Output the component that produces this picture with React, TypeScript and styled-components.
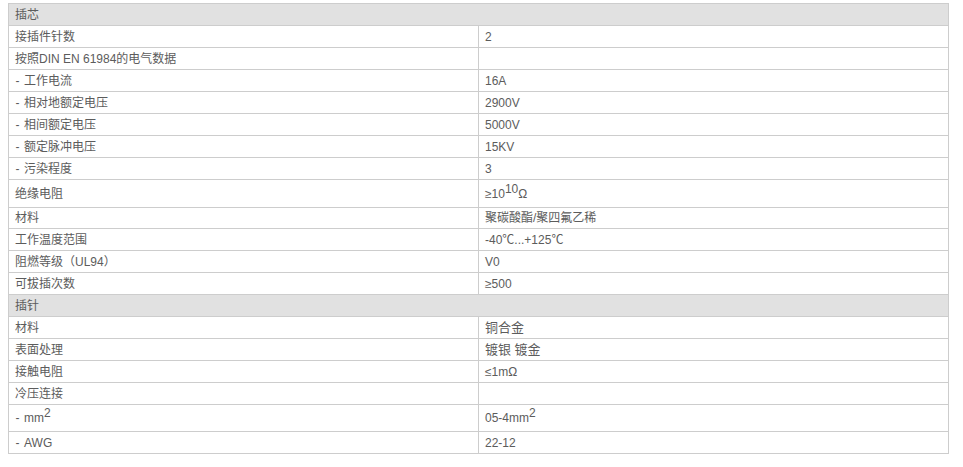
import styled, { createGlobalStyle } from "styled-components"

const Global = createGlobalStyle`
  body {
    margin: 0;
    padding: 3px 8px;
    background: #fff;
    font-family: "Liberation Sans", Arial, "Noto Sans CJK SC", sans-serif;
  }`

const Table = styled.table`
  width: 941px;
  border-collapse: collapse;
  table-layout: fixed;
  font-size: 12px;
  color: #5c5c5c;`

const Row = styled.tr<{ $head?: boolean; $tall?: number }>`
  height: ${p => p.$tall ?? 22}px;
  background: ${p => (p.$head ? "#e1e1e1" : "#fff")};`

const Cell = styled.td<{ $big?: boolean }>`
  border: 1px solid #cdcdcd;
  padding: 0 6px;
  vertical-align: middle;
  white-space: nowrap;
  font-size: ${p => (p.$big ? "13px" : "12px")};
  line-height: 16px;`

const Sup = styled.sup`
  font-size: 12px;
  vertical-align: 5px;
  line-height: 0;`

const Dash = styled.span`
  display: inline-block;
  width: 5px;
  margin-right: 4px;
  text-align: center;`

type Item = {
  k: React.ReactNode
  v?: React.ReactNode
  sub?: boolean
  head?: boolean
  tall?: number
  big?: boolean
}

const rows: Item[] = [
  { k: "插芯", head: true },
  { k: "接插件针数", v: "2" },
  { k: "按照DIN EN 61984的电气数据", v: "" },
  { k: "工作电流", v: "16A", sub: true },
  { k: "相对地额定电压", v: "2900V", sub: true },
  { k: "相间额定电压", v: "5000V", sub: true },
  { k: "额定脉冲电压", v: "15KV", sub: true },
  { k: "污染程度", v: "3", sub: true },
  { k: "绝缘电阻", v: <>≥10<Sup>10</Sup>Ω</>, tall: 28 },
  { k: "材料", v: "聚碳酸酯/聚四氟乙稀", tall: 21 },
  { k: "工作温度范围", v: "-40℃...+125℃" },
  { k: "阻燃等级（UL94）", v: "V0" },
  { k: "可拔插次数", v: "≥500" },
  { k: "插针", head: true },
  { k: "材料", v: "铜合金", big: true },
  { k: "表面处理", v: "镀银 镀金", big: true },
  { k: "接触电阻", v: "≤1mΩ" },
  { k: "冷压连接", v: "" },
  { k: <>mm<Sup>2</Sup></>, v: <>05-4mm<Sup>2</Sup></>, sub: true, tall: 27 },
  { k: "AWG", v: "22-12", sub: true },
]

export default function App() {
  return (
    <>
      <Global />
      <Table>
        <colgroup>
          <col style={{ width: 470 }} />
          <col />
        </colgroup>
        <tbody>
          {rows.map((r, i) => (
            <Row key={i} $head={r.head} $tall={r.tall}>
              {r.head ? (
                <Cell colSpan={2}>{r.k}</Cell>
              ) : (
                <>
                  <Cell>
                    {r.sub && <Dash>-</Dash>}
                    {r.k}
                  </Cell>
                  <Cell $big={r.big}>{r.v}</Cell>
                </>
              )}
            </Row>
          ))}
        </tbody>
      </Table>
    </>
  )
}
